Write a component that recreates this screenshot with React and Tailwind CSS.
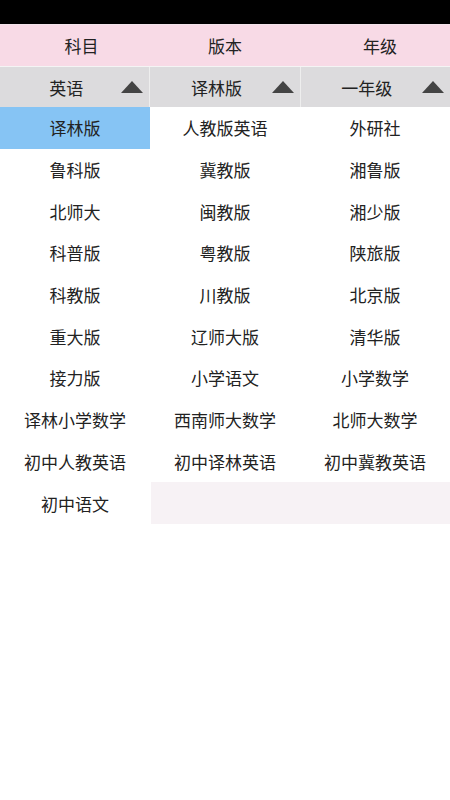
import React from 'react';

const font = { fontFamily: '"Noto Sans CJK SC", "Noto Sans", sans-serif' };

const subjects = ['译林版', '鲁科版', '北师大', '科普版', '科教版', '重大版', '接力版', '译林小学数学', '初中人教英语', '初中语文'];
const editions = ['人教版英语', '冀教版', '闽教版', '粤教版', '川教版', '辽师大版', '小学语文', '西南师大数学', '初中译林英语'];
const grades = ['外研社', '湘鲁版', '湘少版', '陕旅版', '北京版', '清华版', '小学数学', '北师大数学', '初中冀教英语'];

function Triangle() {
  return (
    <svg width="22" height="12" viewBox="0 0 22 12" className="mr-[6px] shrink-0">
      <path d="M11 0 L22 12 L0 12 Z" fill="#444444" />
    </svg>
  );
}

function Picker({ label }) {
  return (
    <div className="flex items-center h-full bg-[#dcdbdd]">
      <span className="flex-1 text-center pl-[11px]">{label}</span>
      <Triangle />
    </div>
  );
}

export default function App() {
  return (
    <div className="w-[450px] h-[800px] bg-white text-[#222222] text-[17px] leading-none" style={font}>
      <div className="h-[24px] bg-black" />
      <div className="grid grid-cols-3 h-[42px] bg-[#f8dae6] border-t border-[#f3e3ea]">
        <div className="flex items-center justify-center pl-[13px]">科目</div>
        <div className="flex items-center justify-center">版本</div>
        <div className="flex items-center justify-center pl-[10px]">年级</div>
      </div>
      <div className="grid grid-cols-3 gap-x-px bg-[#eeeeee] h-[41px] border-t border-[#f4f4f4]">
        <Picker label="英语" />
        <Picker label="译林版" />
        <Picker label="一年级" />
      </div>
      <div className="grid grid-cols-3">
        <div className="flex flex-col">
          {subjects.map((s, i) => (
            <div
              key={s}
              className={'h-[41.7px] flex items-center justify-center ' + (i === 0 ? 'bg-[#86c4f4]' : '')}
            >
              {s}
            </div>
          ))}
        </div>
        <div className="col-span-2 flex flex-col">
          <div className="grid grid-cols-2">
            <div className="flex flex-col">
              {editions.map((s) => (
                <div key={s} className="h-[41.7px] flex items-center justify-center">{s}</div>
              ))}
            </div>
            <div className="flex flex-col">
              {grades.map((s) => (
                <div key={s} className="h-[41.7px] flex items-center justify-center">{s}</div>
              ))}
            </div>
          </div>
          <div className="h-[41.7px] bg-[#f7f2f5] ml-px" />
        </div>
      </div>
    </div>
  );
}
